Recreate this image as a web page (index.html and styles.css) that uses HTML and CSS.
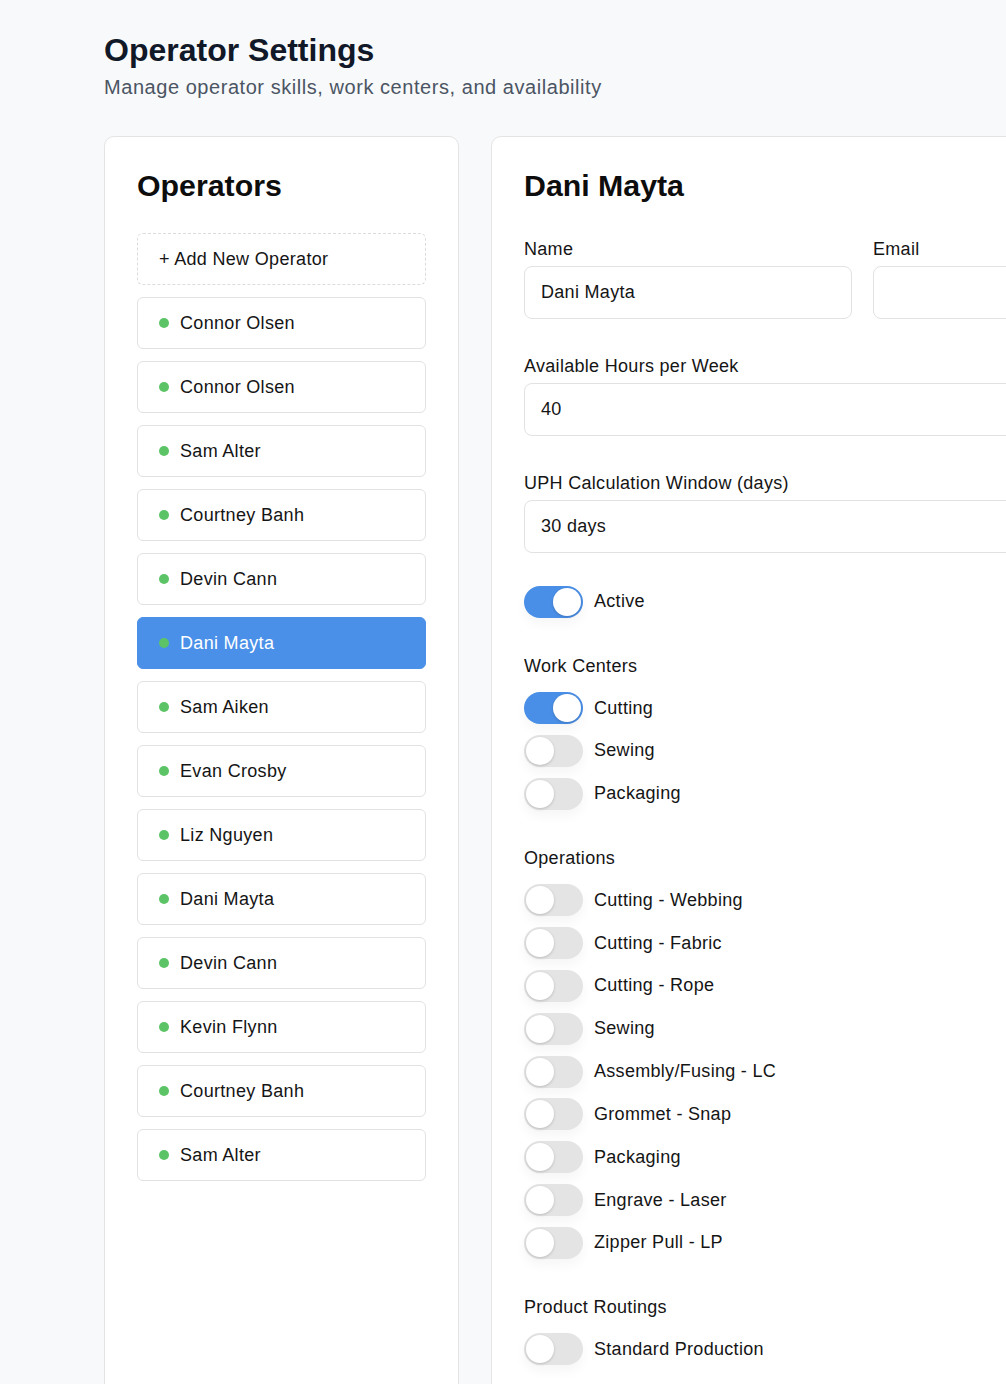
FILE: index.html
```html
<!DOCTYPE html>
<html lang="en">
<head>
<meta charset="utf-8">
<title>Operator Settings</title>
<link rel="stylesheet" href="styles.css">
</head>
<body>
<div class="page">
  <header class="page-header">
    <h1 class="page-title">Operator Settings</h1>
    <p class="page-subtitle">Manage operator skills, work centers, and availability</p>
  </header>
  <div class="layout">
    <aside class="card operators">
      <h2 class="card-title">Operators</h2>
      <div class="op-list">
        <button class="op-item add">+ Add New Operator</button>
        <button class="op-item"><span class="dot"></span>Connor Olsen</button>
        <button class="op-item"><span class="dot"></span>Connor Olsen</button>
        <button class="op-item"><span class="dot"></span>Sam Alter</button>
        <button class="op-item"><span class="dot"></span>Courtney Banh</button>
        <button class="op-item"><span class="dot"></span>Devin Cann</button>
        <button class="op-item selected"><span class="dot"></span>Dani Mayta</button>
        <button class="op-item"><span class="dot"></span>Sam Aiken</button>
        <button class="op-item"><span class="dot"></span>Evan Crosby</button>
        <button class="op-item"><span class="dot"></span>Liz Nguyen</button>
        <button class="op-item"><span class="dot"></span>Dani Mayta</button>
        <button class="op-item"><span class="dot"></span>Devin Cann</button>
        <button class="op-item"><span class="dot"></span>Kevin Flynn</button>
        <button class="op-item"><span class="dot"></span>Courtney Banh</button>
        <button class="op-item"><span class="dot"></span>Sam Alter</button>
      </div>
    </aside>
    <section class="card details">
      <h2 class="card-title">Dani Mayta</h2>
      <div class="field-row">
        <div class="field">
          <label class="field-label">Name</label>
          <div class="input">Dani Mayta</div>
        </div>
        <div class="field">
          <label class="field-label">Email</label>
          <div class="input"></div>
        </div>
      </div>
      <div class="field">
        <label class="field-label">Available Hours per Week</label>
        <div class="input">40</div>
      </div>
      <div class="field">
        <label class="field-label">UPH Calculation Window (days)</label>
        <div class="input">30 days</div>
      </div>

      <div class="toggles first">
        <div class="toggle-row"><span class="toggle on"><span class="knob"></span></span>Active</div>
      </div>

      <div class="section">
        <div class="section-label">Work Centers</div>
        <div class="toggles">
          <div class="toggle-row"><span class="toggle on"><span class="knob"></span></span>Cutting</div>
          <div class="toggle-row"><span class="toggle"><span class="knob"></span></span>Sewing</div>
          <div class="toggle-row"><span class="toggle"><span class="knob"></span></span>Packaging</div>
        </div>
      </div>

      <div class="section">
        <div class="section-label">Operations</div>
        <div class="toggles">
          <div class="toggle-row"><span class="toggle"><span class="knob"></span></span>Cutting - Webbing</div>
          <div class="toggle-row"><span class="toggle"><span class="knob"></span></span>Cutting - Fabric</div>
          <div class="toggle-row"><span class="toggle"><span class="knob"></span></span>Cutting - Rope</div>
          <div class="toggle-row"><span class="toggle"><span class="knob"></span></span>Sewing</div>
          <div class="toggle-row"><span class="toggle"><span class="knob"></span></span>Assembly/Fusing - LC</div>
          <div class="toggle-row"><span class="toggle"><span class="knob"></span></span>Grommet - Snap</div>
          <div class="toggle-row"><span class="toggle"><span class="knob"></span></span>Packaging</div>
          <div class="toggle-row"><span class="toggle"><span class="knob"></span></span>Engrave - Laser</div>
          <div class="toggle-row"><span class="toggle"><span class="knob"></span></span>Zipper Pull - LP</div>
        </div>
      </div>

      <div class="section">
        <div class="section-label">Product Routings</div>
        <div class="toggles">
          <div class="toggle-row"><span class="toggle"><span class="knob"></span></span>Standard Production</div>
        </div>
      </div>
    </section>
  </div>
</div>
</body>
</html>
```

FILE: styles.css
```css
html, body {
  margin: 0;
  padding: 0;
  background: #f8f9fb;
  overflow: hidden;
}

body {
  font-family: "Liberation Sans", Arial, Helvetica, sans-serif;
  color: #151515;
}

.page {
  padding: 30px 0 0 104px;
  width: 1300px;
}

.page-title {
  margin: 0;
  font-size: 32px;
  line-height: 40px;
  font-weight: 700;
  color: #111827;
}

.page-subtitle {
  margin: 3px 0 0;
  font-size: 20px;
  line-height: 28px;
  letter-spacing: 0.55px;
  color: #4b5563;
}

.layout {
  margin-top: 35px;
  display: grid;
  grid-template-columns: 355px 743px;
  column-gap: 32px;
  align-items: start;
}

.card {
  background: #ffffff;
  border: 1px solid #e4e4e4;
  border-radius: 10px;
  padding: 32px 32px 40px;
  box-sizing: border-box;
}

.operators {
  min-height: 1400px;
}

.card-title {
  margin: 0 0 31px;
  font-size: 30.3px;
  line-height: 33px;
  font-weight: 700;
  color: #0d0d0d;
}

.details .card-title {
  margin-bottom: 35.5px;
}

.op-list {
  display: flex;
  flex-direction: column;
  gap: 12px;
}

.op-item {
  display: flex;
  align-items: center;
  gap: 11px;
  height: 52px;
  padding: 0 21px;
  background: #ffffff;
  border: 1px solid #e2e2e2;
  border-radius: 6px;
  font-family: inherit;
  font-size: 18px;
  letter-spacing: 0.32px;
  color: #151515;
  text-align: left;
  box-sizing: border-box;
  width: 100%;
}

.op-item.add {
  border: 1px dashed #dcdcdc;
  gap: 0;
}

.op-item.selected {
  background: #4a90e8;
  border-color: #4a90e8;
  color: #ffffff;
}

.dot {
  width: 10px;
  height: 10px;
  border-radius: 50%;
  background: #5cc466;
  flex: none;
}

.field-row {
  display: grid;
  grid-template-columns: 1fr 1fr;
  column-gap: 21px;
}

.field {
  margin-bottom: 36px;
}

.field-label {
  display: block;
  font-size: 18px;
  line-height: 22px;
  letter-spacing: 0.3px;
  margin-bottom: 6px;
  color: #151515;
}

.input {
  height: 53px;
  box-sizing: border-box;
  border: 1px solid #e2e2e2;
  border-radius: 8px;
  padding: 0 16px;
  display: flex;
  align-items: center;
  font-size: 18px;
  letter-spacing: 0.3px;
  color: #151515;
  background: #fff;
}

.toggles {
  display: flex;
  flex-direction: column;
  gap: 10.85px;
}

.toggles.first {
  margin-top: -3px;
}

.section {
  margin-top: 37.5px;
}

.section-label {
  font-size: 18px;
  line-height: 22px;
  letter-spacing: 0.3px;
  margin-bottom: 15px;
  color: #151515;
}

.toggle-row {
  display: flex;
  align-items: center;
  gap: 11px;
  height: 32px;
  font-size: 18px;
  letter-spacing: 0.3px;
  color: #151515;
}

.toggle {
  position: relative;
  width: 59px;
  height: 32px;
  border-radius: 16px;
  background: #e4e4e4;
  flex: none;
  box-shadow: 0 6px 12px rgba(0, 0, 0, 0.04);
}

.toggle.on {
  background: #4a8fe7;
}

.knob {
  position: absolute;
  top: 2px;
  left: 2px;
  width: 28px;
  height: 28px;
  border-radius: 50%;
  background: #ffffff;
  box-shadow: 0 1px 3px rgba(0, 0, 0, 0.18);
}

.toggle.on .knob {
  left: 29px;
}
```
